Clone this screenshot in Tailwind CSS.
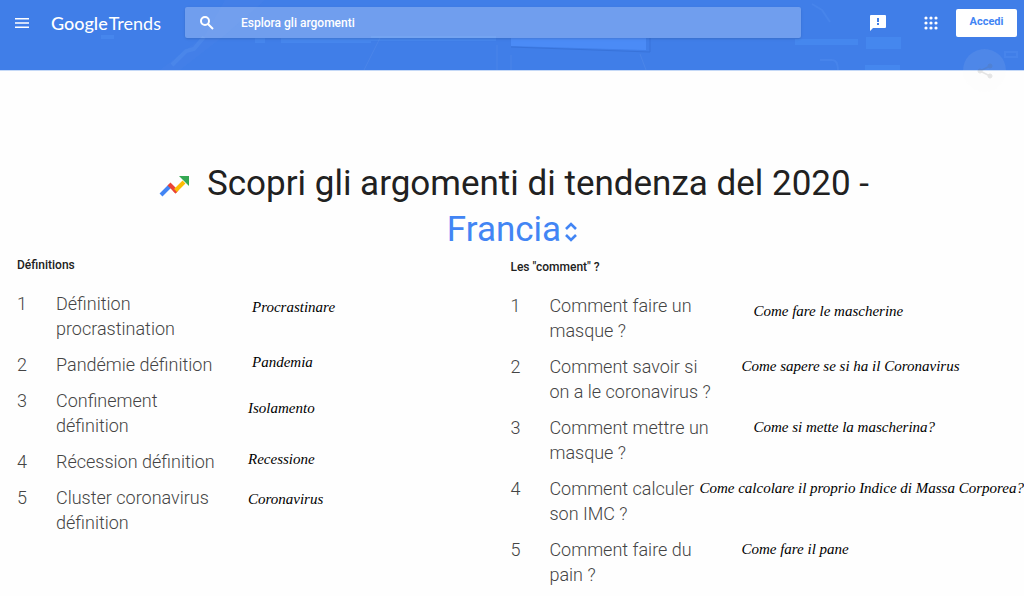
<!DOCTYPE html>
<html lang="it">
<head>
    <meta charset="UTF-8">
    <meta name="viewport" content="width=device-width, initial-scale=1.0">
    <title>Google Trends</title>
    <script src="https://cdn.jsdelivr.net/npm/@tailwindcss/browser@4"></script>
</head>
<body class="bg-[#fefefe] font-['Roboto',sans-serif] text-[#212121] overflow-x-hidden">
    <header class="relative h-[71px] bg-[#407ee8] border-b border-[#c5d9f7]">
        <!-- faint city backdrop -->
        <svg class="absolute inset-0 w-full h-full" viewBox="0 0 1024 70" preserveAspectRatio="none" aria-hidden="true">
            <path d="M160 70l45-35 20-35h40l-40 35-45 35z" fill="#5a8fee" opacity=".12"/>
            <path d="M172 65l14-14 8-2 10-12" stroke="#6aa4f5" stroke-width="4" fill="none" opacity=".2"/>
            <path d="M281 38h90v5h-90zM255 38h10v5h-10zM371 36h125v5H371zM101 35h13v4h-13z" fill="#4f93f5" opacity=".4"/>
            <path d="M511 38h135v12l-135-4z" fill="#4f90fb" opacity=".75"/>
            <path d="M511 47l139 5V38" fill="none" stroke="#3873da"/>
            <path d="M380 38l-16 32M497 45v25M511 55v15M640 54l6 16" stroke="#6698ed" opacity=".3"/>
            <path d="M795 39h63v6h-63zM866 37h35v12h-35zM865 65h35v5h-35z" fill="#4b93f7" opacity=".45"/>
            <path d="M812 4l10 6 8 12M820 60h12q6 0 6 10M1005 52h12v5h-12z" fill="none" stroke="#5d96f2" stroke-width="2" opacity=".25"/>
        </svg>
        <div class="relative flex items-center h-[45px] pl-[14px] pr-[7px]">
            <button aria-label="Menu principale" class="text-white">
                <svg class="w-4 h-4" viewBox="0 0 16 16" fill="none" stroke="currentColor" stroke-width="1.5"><path d="M1 3.7h14M1 8h14M1 12.3h14"/></svg>
            </button>
            <a href="#" class="ml-[21px] w-[134px] flex items-baseline gap-px text-white font-['Lato',sans-serif] text-[18px] leading-6 whitespace-nowrap"><span class="font-medium">Google</span><span>Trends</span></a>
            <label class="flex-1 h-[31px] flex items-center bg-white/25 rounded-xs shadow-sm">
                <svg class="ml-[14px] w-4 h-4 text-white" viewBox="0 0 16 16" fill="none" stroke="currentColor" stroke-width="2"><circle cx="6" cy="6" r="4"/><path d="M9 9l5 5"/></svg>
                <input type="text" placeholder="Esplora gli argomenti" aria-label="Esplora gli argomenti" class="ml-[26px] flex-1 min-w-0 bg-transparent outline-none text-xs font-medium text-white placeholder:text-white">
            </label>
            <button aria-label="Invia feedback" class="ml-[69px] text-white">
                <svg class="w-4 h-4" viewBox="0 0 16 16"><path d="M1 0h14q1 0 1 1v11q0 1-1 1H3l-3 3V1q0-1 1-1z" fill="currentColor"/><path d="M8 3v4M8 8v2" stroke="#407ee8" stroke-width="2"/></svg>
            </button>
            <button aria-label="App Google" class="ml-[38px] text-white">
                <svg class="w-[14px] h-[14px]" viewBox="0 0 14 14" fill="currentColor"><circle cx="2" cy="2" r="1.6"/><circle cx="7" cy="2" r="1.6"/><circle cx="12" cy="2" r="1.6"/><circle cx="2" cy="7" r="1.6"/><circle cx="7" cy="7" r="1.6"/><circle cx="12" cy="7" r="1.6"/><circle cx="2" cy="12" r="1.6"/><circle cx="7" cy="12" r="1.6"/><circle cx="12" cy="12" r="1.6"/></svg>
            </button>
            <button class="ml-[18px] w-[61px] h-7 rounded-xs bg-white text-[11px] font-bold text-[#4285f4]">Accedi</button>
        </div>
        <button aria-label="Condividi" class="absolute right-[18px] top-[49px] w-[43px] h-[43px] rounded-full bg-[#f4f4f4]/8 flex items-center justify-center">
            <svg class="w-4 h-4" viewBox="0 0 16 16" fill="#606060" stroke="#606060" opacity=".15"><path d="M13 3L3 8l10 5" fill="none" stroke-width="1.5"/><circle cx="13" cy="3" r="2"/><circle cx="3" cy="8" r="2"/><circle cx="13" cy="13" r="2"/></svg>
        </button>
    </header>

    <main>
        <h1 class="pt-[90px] text-center text-[35px] leading-[46px]">
            <span class="flex justify-center items-center gap-[18px] pl-1">
                <svg class="mt-1 w-[30px] h-[22px]" viewBox="0 0 30 22" fill="none" stroke-width="4"><path d="M2 20l9-9" stroke="#4285f4"/><path d="M10 9l8 8" stroke="#ea4335"/><path d="M16 16l9-9" stroke="#fbbc04"/><path d="M15 17l1.5-1.5" stroke="#ea4335"/><path d="M20 1h10v10z" fill="#34a853"/></svg>
                <span>Scopri gli argomenti di tendenza del 2020 -</span>
            </span>
            <span class="flex justify-center items-center gap-1 text-[#4285f4]">
                <select aria-label="Paese" class="appearance-none field-sizing-content bg-transparent outline-none">
                    <option>Francia</option>
                </select>
                <svg class="mt-1 w-3 h-5" viewBox="0 0 12 20" fill="none" stroke="currentColor" stroke-width="2.6"><path d="M1 7l5-5 5 5M1 13l5 5 5-5"/></svg>
            </span>
        </h1>

        <div class="flex pl-[17px]">
            <section class="w-[49%]">
                <h2 class="pt-[2px] text-xs leading-5 font-medium">Définitions</h2>
                <ol class="mt-4 flex flex-col gap-[11px] text-lg leading-[25px] font-light text-[#444]">
                    <li class="flex"><span class="w-[39px] shrink-0">1</span><span class="w-[168px] shrink-0">Définition procrastination</span><em class="ml-7 pt-1.5 font-['Liberation_Serif',serif] text-[15px] leading-5 font-normal text-black whitespace-nowrap">Procrastinare</em></li>
                    <li class="flex"><span class="w-[39px] shrink-0">2</span><span class="w-[168px] shrink-0">Pandémie définition</span><em class="ml-7 font-['Liberation_Serif',serif] text-[15px] leading-5 font-normal text-black whitespace-nowrap">Pandemia</em></li>
                    <li class="flex"><span class="w-[39px] shrink-0">3</span><span class="w-[168px] shrink-0">Confinement<br>définition</span><em class="ml-6 pt-2.5 font-['Liberation_Serif',serif] text-[15px] leading-5 font-normal text-black whitespace-nowrap">Isolamento</em></li>
                    <li class="flex"><span class="w-[39px] shrink-0">4</span><span class="w-[168px] shrink-0">Récession définition</span><em class="ml-6 font-['Liberation_Serif',serif] text-[15px] leading-5 font-normal text-black whitespace-nowrap">Recessione</em></li>
                    <li class="flex"><span class="w-[39px] shrink-0">5</span><span class="w-[168px] shrink-0">Cluster coronavirus définition</span><em class="ml-6 pt-1 font-['Liberation_Serif',serif] text-[15px] leading-5 font-normal text-black whitespace-nowrap">Coronavirus</em></li>
                </ol>
            </section>
            <section class="flex-1 min-w-0">
                <h2 class="pt-[4px] text-xs leading-5 font-medium">Les "comment" ?</h2>
                <ol class="mt-4 flex flex-col gap-[11px] text-lg leading-[25px] font-light text-[#444]">
                    <li class="flex"><span class="w-[39px] shrink-0">1</span><span class="w-[168px] shrink-0">Comment faire un<br>masque ?</span><em class="ml-9 pt-2 font-['Liberation_Serif',serif] text-[15px] leading-5 font-normal text-black whitespace-nowrap">Come fare le mascherine</em></li>
                    <li class="flex"><span class="w-[39px] shrink-0">2</span><span class="w-[168px] shrink-0">Comment savoir si<br>on a le coronavirus ?</span><em class="ml-6 pt-0.5 font-['Liberation_Serif',serif] text-[15px] leading-5 font-normal text-black whitespace-nowrap">Come sapere se si ha il Coronavirus</em></li>
                    <li class="flex"><span class="w-[39px] shrink-0">3</span><span class="w-[168px] shrink-0">Comment mettre un<br>masque ?</span><em class="ml-9 pt-0.5 font-['Liberation_Serif',serif] text-[15px] leading-5 font-normal text-black whitespace-nowrap">Come si mette la mascherina?</em></li>
                    <li class="flex"><span class="w-[39px] shrink-0">4</span><span class="w-[168px] shrink-0">Comment calculer<br>son IMC ?</span><em class="-ml-[18px] pt-0.5 font-['Liberation_Serif',serif] text-[15px] leading-5 font-normal text-black whitespace-nowrap">Come calcolare il proprio Indice di Massa Corporea?</em></li>
                    <li class="flex"><span class="w-[39px] shrink-0">5</span><span class="w-[168px] shrink-0">Comment faire du<br>pain ?</span><em class="ml-6 pt-0.5 font-['Liberation_Serif',serif] text-[15px] leading-5 font-normal text-black whitespace-nowrap">Come fare il pane</em></li>
                </ol>
            </section>
        </div>
    </main>
</body>
</html>
